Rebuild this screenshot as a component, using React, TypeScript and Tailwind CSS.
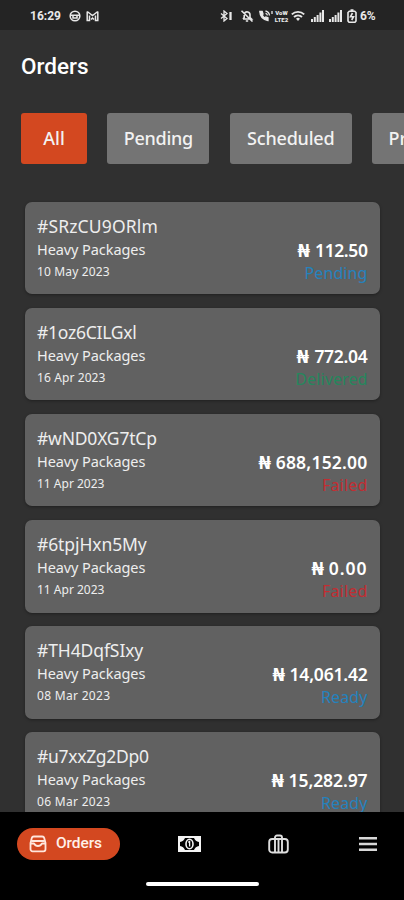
import { clsx } from "clsx";

type Order = {
  id: string;
  date: string;
  amount: string;
  status: "Pending" | "Delivered" | "Failed" | "Ready";
  idClass: string;
  dateClass: string;
  amountClass: string;
};

const ORDERS: Order[] = [
  { id: "#SRzCU9ORlm", date: "10 May 2023", amount: "112.50", status: "Pending", idClass: "tracking-[0.15px]", dateClass: "tracking-[0.15px]", amountClass: "tracking-[-0.4px]" },
  { id: "#1oz6CILGxl", date: "16 Apr 2023", amount: "772.04", status: "Delivered", idClass: "tracking-[-0.25px]", dateClass: "tracking-[0.1px]", amountClass: "tracking-[-0.3px]" },
  { id: "#wND0XG7tCp", date: "11 Apr 2023", amount: "688,152.00", status: "Failed", idClass: "tracking-[-0.2px]", dateClass: "tracking-[0px]", amountClass: "tracking-[0.2px]" },
  { id: "#6tpjHxn5My", date: "11 Apr 2023", amount: "0.00", status: "Failed", idClass: "tracking-[-0.1px]", dateClass: "tracking-[0px]", amountClass: "tracking-[1px]" },
  { id: "#TH4DqfSIxy", date: "08 Mar 2023", amount: "14,061.42", status: "Ready", idClass: "tracking-[-0.1px]", dateClass: "tracking-[0.3px]", amountClass: "tracking-[-0.2px]" },
  { id: "#u7xxZg2Dp0", date: "06 Mar 2023", amount: "15,282.97", status: "Ready", idClass: "tracking-[-0.3px]", dateClass: "tracking-[0.3px]", amountClass: "tracking-[-0.1px]" },
];

const STATUS_COLOR: Record<Order["status"], string> = {
  Pending: "text-[#2582bd] tracking-[0.1px]",
  Delivered: "text-[#25875d] tracking-[0.1px]",
  Failed: "text-[#c22d32] tracking-[0.2px]",
  Ready: "text-[#2582bd] tracking-[0.1px]",
};

const FILTERS = [
  { label: "All", className: "w-[66px] bg-[#d34820]" },
  { label: "Pending", className: "w-[102px] bg-[#747474] tracking-[-0.25px]" },
  { label: "Scheduled", className: "w-[122px] bg-[#747474] tracking-[-0.2px]" },
  { label: "Processing", className: "w-[126px] bg-[#747474]" },
];

function Signal() {
  return (
    <svg viewBox="0 0 13 12" className="h-3 w-[13px]" fill="#e8e8e8">
      <path d="M0 9h2v3H0zM2.8 7h2v5h-2zM5.6 5h2v7h-2zM8.4 2.5h2V12h-2zM11 0h2v12h-2z" />
    </svg>
  );
}

function StatusBar() {
  return (
    <div className="flex h-[30px] shrink-0 items-center bg-[#242424] pt-[2px] pl-[30px] font-['Roboto',sans-serif] text-[12px] font-bold text-[#e8e8e8]">
      <span className="w-[39px]">16:29</span>
      <svg viewBox="0 0 12 12" className="h-3 w-3" fill="none" stroke="#e8e8e8" strokeWidth="1.6">
        <circle cx="6" cy="6" r="4.8" />
        <path d="M1.5 5.2h9M4 5v3h4V5" />
      </svg>
      <svg viewBox="0 0 13 12" className="ml-[5px] h-3 w-[13px]" fill="none" stroke="#e8e8e8" strokeWidth="1.5">
        <path d="M1.2 1.5v9h2.3v-5M11.8 1.5v9H9.5v-5M1.2 1.5l5.3 4 5.3-4M5 9.5L6.5 8 8 9.5" />
      </svg>
      {/* System icons */}
      <div className="ml-[121px] flex items-center">
        <svg viewBox="0 0 13 12" className="h-3 w-[13px]" fill="none" stroke="#e8e8e8" strokeWidth="1.3">
          <path d="M1 3.5l6 5-3 2.5V1l3 2.5-6 5" />
          <path d="M10.5 2v8" strokeWidth="2.3" />
        </svg>
        <svg viewBox="0 0 14 12" className="ml-[7px] h-3 w-[14px]" fill="none" stroke="#e8e8e8" strokeWidth="1.6">
          <path d="M3 9h8.5L10 7.5V5A3 3 0 0 0 4.4 3.4M3 9l1.2-1.5V5M5.8 11h2.4M1.5.8l11 10.7" />
        </svg>
        <svg viewBox="0 0 16 12" className="ml-1 h-3 w-4" fill="none" stroke="#e8e8e8">
          <path d="M1.8 1.5C2 6 5 9.7 10 10.5V7.8L7.8 7 6.2 7.8 4.4 5.5 5 4l-.8-2.5z" fill="#e8e8e8" strokeWidth="1.3" />
          <path d="M7.5 1a5 5 0 0 1 4 4.5M7.5 3.3a2.6 2.6 0 0 1 2 2M14 1v3" strokeWidth="1.3" />
        </svg>
        <span className="flex w-[15px] flex-col items-center justify-center text-[6px] leading-[7px] font-black">
          <span>VoW</span>
          <span>LTE2</span>
        </span>
        <svg viewBox="0 0 14 12" className="ml-[2px] h-3 w-[14px]" fill="none" stroke="#e8e8e8" strokeWidth="1.9">
          <path d="M.8 4.4a9 9 0 0 1 12.4 0M3 7a6 6 0 0 1 8 0" />
          <path d="M5 8.7L7 11l2-2.3a3 3 0 0 0-4 0z" fill="#e8e8e8" stroke="none" />
        </svg>
        <span className="ml-[6px]"><Signal /></span>
        <span className="ml-[5px]"><Signal /></span>
        <svg viewBox="0 0 10 14" className="ml-[5px] h-[14px] w-[10px]" fill="none" stroke="#e8e8e8" strokeWidth="1.6">
          <path d="M3.5 1h3M2.3 2.2h5.4L9 3.5V12l-1 1.2H2L1 12V3.5z" />
          <path d="M5.5 4L3.5 7.7h3L4.7 11" />
        </svg>
        <span className="ml-[3px] text-[12px] tracking-[-0.2px]">6%</span>
      </div>
    </div>
  );
}

function OrderCard({ order }: { order: Order }) {
  return (
    <div className="flex h-[92.6px] shrink-0 justify-between rounded-[7px] bg-[#616161] px-3 shadow-[0_1px_3px_rgba(0,0,0,0.35)]">
      <div className="flex flex-col pl-[0.5px] whitespace-nowrap text-[#eeeeee]">
        <div className={clsx("mt-3 h-6 text-[17.5px] leading-6", order.idClass)}>{order.id}</div>
        <div className="mt-[1px] h-5 text-[14.5px] leading-5 tracking-[-0.08px]">Heavy Packages</div>
        <div className={clsx("mt-[3px] h-5 text-[12px] leading-5", order.dateClass)}>{order.date}</div>
      </div>
      <div className="flex flex-col items-end whitespace-nowrap">
        <div className="mt-9 flex h-6 text-[17.5px] leading-6 font-semibold text-white">
          <span className="mr-[5px] inline-block origin-right scale-x-[1.25] font-bold">₦</span>
          <span className={order.amountClass}>{order.amount}</span>
        </div>
        <div className={clsx("mt-[1px] h-5 text-[16px] leading-5", STATUS_COLOR[order.status])}>{order.status}</div>
      </div>
    </div>
  );
}

function BottomNav() {
  return (
    <div className="flex h-[88px] shrink-0 flex-col bg-black">
      <div className="flex items-center pt-4 pl-[17px]">
        <div className="flex h-8 w-[103px] items-center rounded-full bg-[#d34820] pl-3">
          <svg viewBox="0 0 18 18" className="h-[18px] w-[18px]" fill="none" stroke="#ffe6dc" strokeWidth="1.8" strokeLinejoin="round">
            <path d="M4.8 1.5h8.4c1.3 0 1.8.6 2 1.6l1.3 5v6.200a2 2 0 0 1-2 2h-11a2 2 0 0 1-2-2V8.100l1.300-5c.2-1 .7-1.600 2-1.600z" />
            <path d="M2.300 6h13.400M1.500 8.500H5c.8 1.500 2.200 2.500 4 2.500s3.200-1 4-2.500h3.500" />
          </svg>
          <span className="ml-[9px] font-['Roboto',sans-serif] text-[15.5px] font-medium tracking-[-0.1px] text-[#fff0e8]">Orders</span>
        </div>
        <svg viewBox="0 0 23 16" className="ml-[58px] h-4 w-[23px]">
          <path d="M0 0h23v16H0z" fill="#f4f4f4" />
          <path d="M7 2h9c1 2.300 2.500 3.500 5 4v4c-2.500.5-4 1.700-5 4H7c-1-2.300-2.500-3.500-5-4V6c2.500-.5 4-1.700 5-4z" fill="#000" />
          <ellipse cx="11.500" cy="8" rx="3.500" ry="4.700" fill="none" stroke="#f4f4f4" strokeWidth="1.600" />
          <path d="M10.300 6.400l1.300-.9v5" fill="none" stroke="#f4f4f4" strokeWidth="1.300" />
        </svg>
        <svg viewBox="0 0 21 20" className="ml-[67px] h-5 w-[21px]" fill="none" stroke="#dedede" strokeWidth="1.900">
          <rect x="1.200" y="5" width="18.600" height="13.500" rx="3" />
          <path d="M7 18.500V3.500A2 2 0 0 1 9 1.500h3a2 2 0 0 1 2 2v15M10.500 5v13.500" />
        </svg>
        <svg viewBox="0 0 18 14" className="ml-[70px] h-[14px] w-[18px]" fill="#d8d8d8">
          <path d="M0 0h18v2.500H0zM0 5.700h18v2.500H0zM0 11.400h18v2.500H0z" />
        </svg>
      </div>
      <div className="mt-[22px] ml-[146px] h-1 w-[113px] rounded-full bg-white" />
    </div>
  );
}

export default function App() {
  return (
    <div className="flex h-[900px] w-[404px] flex-col overflow-hidden bg-[#303030] font-['Noto_Sans',sans-serif]">
      <StatusBar />
      <h1 className="mt-[20px] h-8 shrink-0 pl-[21px] font-['Roboto',sans-serif] text-[22.5px] leading-8 font-medium text-white">
        Orders
      </h1>

      {/* Filter chips */}
      <div className="mt-[31px] flex h-[51px] shrink-0 gap-[20.4px] overflow-hidden pl-[21px]">
        {FILTERS.map((f) => (
          <div
            key={f.label}
            className={clsx(
              "flex shrink-0 items-center justify-center rounded-[3px] text-[18px] font-medium text-[#f2f2f2]",
              f.className
            )}
          >
            {f.label}
          </div>
        ))}
      </div>

      <div className="mt-[28px] flex min-h-0 flex-1 flex-col gap-[13.6px] overflow-hidden px-[24.5px] pt-[9.5px]">
        {ORDERS.map((o) => (
          <OrderCard key={o.id} order={o} />
        ))}
      </div>
      <BottomNav />
    </div>
  );
}
